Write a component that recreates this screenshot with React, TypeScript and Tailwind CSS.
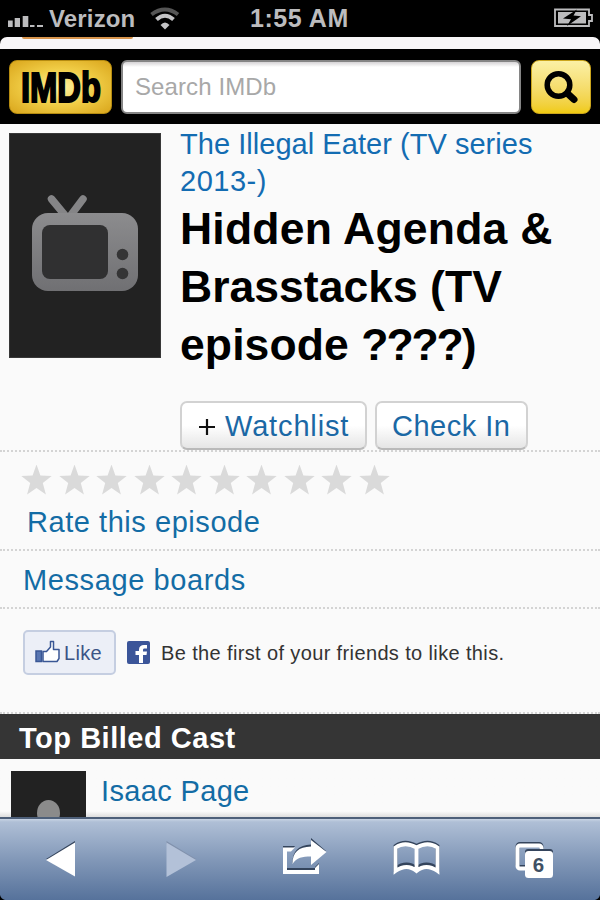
import React from "react";

const star = "M15.5 -0.5l3.9 11.100 11.3.4-8.9 7 3.1 11.400-9.4-6.500-9.4 6.500 3.1-11.400-8.9-7 11.3-.4z";

function StatusBar() {
  return (
    <div className="flex h-[37px] shrink-0 items-center bg-black font-bold text-[#bcbcbe]">
      <svg width="40" height="37" className="ml-[5px] shrink-0" fill="#bcbcbe">
        <path d="M3 20.500h4.700V27H3zM9.700 18H15v9H9.700zM17.700 16h5.600v11h-5.600zM25 25h4.500v2H25zM32 25h6v2h-6z" />
      </svg>
      <span className="ml-[4px] w-[88px] whitespace-nowrap text-[24px] leading-[37px] tracking-[0.15px]">Verizon</span>
      <svg width="32" height="37" className="ml-[12px] shrink-0" fill="none">
        <path d="M2.500 14.500Q16 4.500 29 14.500" stroke="#555" strokeWidth="4" />
        <path d="M7.500 19.500Q16 12 24.500 19.500" stroke="#c4c4c6" strokeWidth="4" />
        <path d="M11.500 25Q16 20 20.500 25L16 29.500z" fill="#c4c4c6" />
      </svg>
      <span className="ml-[69px] whitespace-nowrap text-[25px] leading-[37px] tracking-[0.55px]">1:55 AM</span>
      <svg width="42" height="37" className="mr-[4px] ml-auto shrink-0">
        <path d="M1 9.500h34v5.500h3v6h-3v5H1z" fill="none" stroke="#bcbcbe" strokeWidth="1.800" />
        <path d="M4 12h28v11.500H4z" fill="#bcbcbe" />
        <path d="M23 9.500L9 18.500l8 .8-4 6.700 14-9.800-7.500-.7z" fill="#000" />
      </svg>
    </div>
  );
}

function Header() {
  return (
    <div className="flex h-[75px] shrink-0 items-start bg-black pt-[11px] pl-[9px]">
      <div className="h-[54px] w-[103px] rounded-[8px] border border-[#b58b10] bg-[radial-gradient(ellipse_at_center,#fff3a0_0%,#f0cc45_50%,#d9a51b_100%)]">
        <svg width="101" height="52" className="overflow-visible">
          <text x="11" y="41" textLength="80" lengthAdjust="spacingAndGlyphs" fontFamily="Liberation Sans" fontWeight="bold" fontSize="42.500" fill="#000" stroke="#000" strokeWidth="2">IMDb</text>
        </svg>
      </div>
      <div className="ml-[9px] flex h-[54px] w-[400px] items-center rounded-[6px] border-2 border-[#858585] bg-[linear-gradient(#d5d3d5_0,#fff_5px)] pl-[12px] text-[24px] tracking-[0.1px] text-[#a8a8a8]">
        Search IMDb
      </div>
      <div className="ml-[10px] h-[54px] w-[60px] rounded-[8px] border border-[#cba51d] bg-linear-to-b from-[#fbf0a5] to-[#f0cb0c]">
        <svg width="58" height="52" fill="none" stroke="#000">
          <circle cx="26.500" cy="24" r="11.300" strokeWidth="5.500" />
          <path d="M35.500 32.500l6.500 6" strokeWidth="7" strokeLinecap="round" />
        </svg>
      </div>
    </div>
  );
}

function Title() {
  return (
    <div className="flex h-[328px] shrink-0 border-b-2 border-dotted border-[#d4d4d4] pt-[9px] pl-[9px]">
      <div className="h-[225px] w-[152px] shrink-0 border border-[#383838] bg-[#222]">
        <svg width="150" height="223" viewBox="10 134 150 223">
          <defs>
            <linearGradient id="tv" x1="0" y1="0" x2="0" y2="1">
              <stop offset="0" stopColor="#8c8c8e" />
              <stop offset="1" stopColor="#707073" />
            </linearGradient>
          </defs>
          <path d="M51.500 199L68 219 83 199" fill="none" stroke="#858587" strokeWidth="7.500" strokeLinecap="round" />
          <rect x="32" y="213" width="106" height="78" rx="16" fill="url(#tv)" />
          <rect x="42" y="225" width="66" height="54" rx="8" fill="#303031" />
          <circle cx="122.500" cy="254.500" r="5.800" fill="#353536" />
          <circle cx="122.500" cy="273.500" r="5.800" fill="#353536" />
        </svg>
      </div>
      <div className="ml-[19px] min-w-0">
        <div className="-mt-[8px] text-[29px] leading-[38px] text-[#136cb2]">
          <div className="whitespace-nowrap tracking-[0.04px]">The Illegal Eater (TV series</div>
          <div className="-mt-px tracking-[0.5px]">2013-)</div>
        </div>
        <h1 className="text-[44.5px] leading-[58px] font-bold text-black">
          <div className="whitespace-nowrap tracking-[0.22px]">Hidden Agenda &amp;</div>
          <div className="whitespace-nowrap tracking-[0.02px]">Brasstacks (TV</div>
          <div className="whitespace-nowrap tracking-[0.1px]">episode <span className="tracking-[-2.1px]">????)</span></div>
        </h1>
        <div className="mt-[27px] flex gap-[8px] text-[29px] text-[#1b68a5]">
          <div className="flex h-[49px] w-[187px] items-center rounded-[7px] border-2 border-[#d2d2d2] border-b-[#b9b9b9] bg-linear-to-b from-white from-50% to-[#e5e5e5] pt-[2px] pl-[16px] whitespace-nowrap">
            <svg width="18" height="18" stroke="#111" strokeWidth="2.200"><path d="M9 1v16M1 9h16" /></svg>
            <span className="ml-[9px] tracking-[0.85px]">Watchlist</span>
          </div>
          <div className="flex h-[49px] w-[153px] items-center rounded-[7px] border-2 border-[#d2d2d2] border-b-[#b9b9b9] bg-linear-to-b from-white from-50% to-[#e5e5e5] pt-[2px] pl-[15px] tracking-[0.5px] whitespace-nowrap">Check In</div>
        </div>
      </div>
    </div>
  );
}

function Toolbar() {
  return (
    <div className="h-[83px] shrink-0 border-t-2 border-[#4d5f79] bg-[linear-gradient(#c8d4e4_0,#afbfd6_3px,#8298b8_50%,#56729b_100%)]">
      <svg width="600" height="81" viewBox="0 819 600 81">
        <path d="M46 859l29-18v3L50 861z" fill="#34445c" />
        <path d="M46 860l29-17.500v34z" fill="#fff" />
        <path d="M166.500 841l29.500 18-2 1-27.500-16z" fill="#8191ac" />
        <path d="M166.500 842.500L196 860l-29.500 17z" fill="#b3c1d8" />
        <path d="M295 846h-12v26h36v-9l-4 4v1h-28v-18h5z" fill="#34445c" />
        <path d="M295 847.500h-12V874h36v-10l-4 4v2h-28v-18.500h4z" fill="#fff" />
        <path d="M311 838l15 13-15 12v-8c-9 0-14 1-18.500 8 0-12 6-18 18.500-18.500z" fill="#34445c" />
        <path d="M311 840l15.500 12L311 865v-8.500c-9 0-14 1-18.500 7.500 0-12 6-17 18.500-17.500z" fill="#fff" />
        <g fill="none" strokeWidth="3.800">
          <path d="M395.500 870V847.500Q405 841 416.500 847.500 428 841 437.500 847.500V870Q426 862 416.500 870 407 862 395.500 870z" stroke="#34445c" transform="translate(0 -1.500)" />
          <path d="M395.500 871V847.500Q405 841 416.500 847.500 428 841 437.500 847.500V871Q426 863 416.500 871 407 863 395.500 871zM416.500 847V871" stroke="#fff" />
        </g>
        <rect x="517.500" y="844" width="24" height="23" rx="2.500" fill="none" stroke="#34445c" strokeWidth="4" />
        <rect x="517.500" y="845.500" width="24" height="23" rx="2.500" fill="none" stroke="#fff" strokeWidth="4" />
        <rect x="525" y="849" width="28" height="27" rx="3" fill="#34445c" />
        <rect x="525" y="851" width="28" height="27" rx="3.500" fill="#fff" />
        <text x="538.500" y="872" textAnchor="middle" fontFamily="Liberation Sans" fontWeight="bold" fontSize="20.500" fill="#405064">6</text>
        <path d="M0 895Q1 899 5 900H0zM600 895Q599 899 595 900h5z" fill="#000" />
      </svg>
    </div>
  );
}

export default function App() {
  return (
    <div className="flex h-[900px] w-[600px] flex-col overflow-hidden bg-[#fafafa] font-['Liberation_Sans',Arial,sans-serif]">
      <StatusBar />
      <div className="h-[12px] shrink-0 bg-black">
        <div className="h-full rounded-t-[7px] bg-[#f8f6f8] pl-[22px]">
          <div className="h-[2px] w-[111px] rounded-b-[2px] bg-[#d8954d]" />
        </div>
      </div>
      <Header />
      <Title />
      <div className="h-[99px] shrink-0 border-b-2 border-dotted border-[#d4d4d4] pt-[13px] pl-[21px]">
        <div className="flex h-[31px]">
          {Array.from({ length: 10 }, (_, i) => (
            <svg key={i} width="37.5" height="31" className="shrink-0" fill="#dadada"><path d={star} /></svg>
          ))}
        </div>
        <div className="mt-[8px] ml-[6px] text-[29px] leading-[36px] tracking-[0.55px] text-[#136ca5]">Rate this episode</div>
      </div>
      <div className="h-[58px] shrink-0 border-b-2 border-dotted border-[#d4d4d4] pl-[23px] text-[29px] leading-[59px] tracking-[0.6px] text-[#136ca5]">Message boards</div>
      <div className="flex h-[105px] shrink-0 items-start border-b-2 border-dotted border-[#d4d4d4] pt-[21px] pl-[23px]">
        <div className="flex h-[45px] w-[93px] items-center rounded-[5px] border-2 border-[#c5cee1] bg-[#eceff7] pl-[10px] text-[20px] text-[#3b5486]">
          <svg width="26" height="25" className="shrink-0">
            <path d="M1 11h5.500v10.500H1z" fill="#5976b2" stroke="#3a5795" strokeWidth="1.500" />
            <path d="M8 11.500h3.500L15.500 7V1.500h3V9.500h5.500v9l-2 3H8z" fill="#fff" stroke="#3a5795" strokeWidth="1.500" strokeLinejoin="round" />
          </svg>
          <span className="ml-[3px] tracking-[0.3px]">Like</span>
        </div>
        <svg width="23" height="23" className="mt-[11px] ml-[11px] shrink-0">
          <rect width="23" height="23" rx="2" fill="#3b5599" />
          <path d="M12 22v-8H8.500v-4H12V8.500C12 5.500 14 4 17 4h3v3.500h-2.500C16.500 7.500 16 8 16 9v1.500h4l-.5 3.500H16v8z" fill="#fff" />
        </svg>
        <span className="ml-[11px] text-[20px] leading-[46px] tracking-[0.37px] whitespace-nowrap text-[#333]">Be the first of your friends to like this.</span>
      </div>
      <div className="h-[45px] shrink-0 bg-[#353535] pl-[19px] text-[29px] leading-[49px] font-bold tracking-[0.52px] text-white">Top Billed Cast</div>
      <div className="flex h-[58px] shrink-0 overflow-hidden bg-linear-to-b from-[#fafafa] from-90% to-[#ddd] pt-[12px] pl-[11px]">
        <svg width="75" height="46" className="shrink-0">
          <path d="M0 0h75v46H0z" fill="#222" />
          <ellipse cx="37.500" cy="42" rx="11.500" ry="13" fill="#8b8b8b" />
        </svg>
        <span className="ml-[15px] text-[29px] leading-[40px] tracking-[0.35px] text-[#136ca5]">Isaac Page</span>
      </div>
      <Toolbar />
    </div>
  );
}
